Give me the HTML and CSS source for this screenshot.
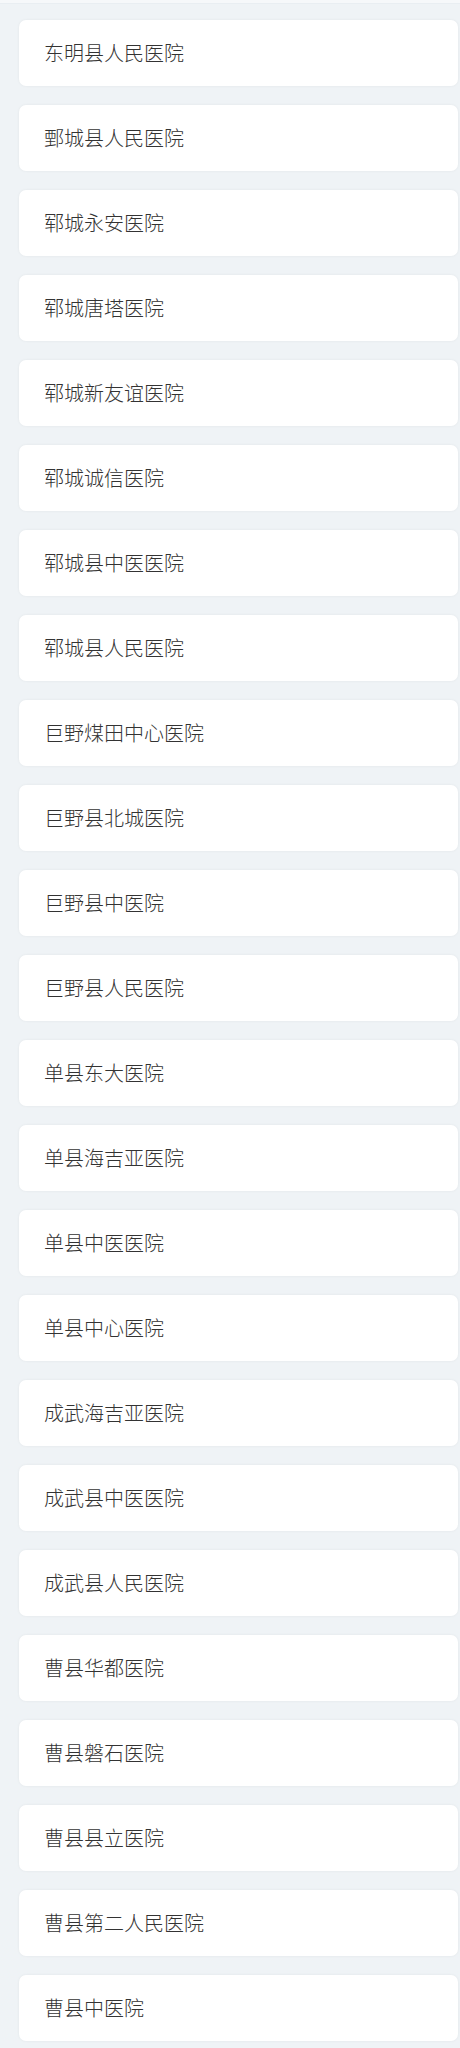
FILE: index.html
```html
<!DOCTYPE html>
<html lang="zh-CN">
<head>
<meta charset="utf-8">
<title>医院列表</title>
<link rel="stylesheet" href="styles.css">
</head>
<body>
<div class="topbar"></div>
<ul class="list">
<li class="card">东明县人民医院</li>
<li class="card">鄄城县人民医院</li>
<li class="card">郓城永安医院</li>
<li class="card">郓城唐塔医院</li>
<li class="card">郓城新友谊医院</li>
<li class="card">郓城诚信医院</li>
<li class="card">郓城县中医医院</li>
<li class="card">郓城县人民医院</li>
<li class="card">巨野煤田中心医院</li>
<li class="card">巨野县北城医院</li>
<li class="card">巨野县中医院</li>
<li class="card">巨野县人民医院</li>
<li class="card">单县东大医院</li>
<li class="card">单县海吉亚医院</li>
<li class="card">单县中医医院</li>
<li class="card">单县中心医院</li>
<li class="card">成武海吉亚医院</li>
<li class="card">成武县中医医院</li>
<li class="card">成武县人民医院</li>
<li class="card">曹县华都医院</li>
<li class="card">曹县磐石医院</li>
<li class="card">曹县县立医院</li>
<li class="card">曹县第二人民医院</li>
<li class="card">曹县中医院</li>
</ul>
</body>
</html>
```
FILE: styles.css
```css
html, body {
  margin: 0;
  padding: 0;
  background: #eff3f6;
}
body {
  font-family: "Noto Sans CJK SC", "Noto Sans", sans-serif;
  color: #333;
}
.topbar {
  height: 3px;
  background: #f6f8fa;
  border-bottom: 1px solid #e9eef2;
}
.list {
  list-style: none;
  margin: 0;
  padding: 16px 2px 20px 19px;
  display: flex;
  flex-direction: column;
  gap: 19px;
}
.card {
  height: 66px;
  box-sizing: border-box;
  display: flex;
  align-items: center;
  padding-left: 25px;
  background: #fff;
  border-radius: 7px;
  box-shadow: 0 0 3px rgba(0, 0, 0, 0.06);
  font-size: 20px;
  font-weight: 300;
  line-height: 1;
  color: #333;
}
```
